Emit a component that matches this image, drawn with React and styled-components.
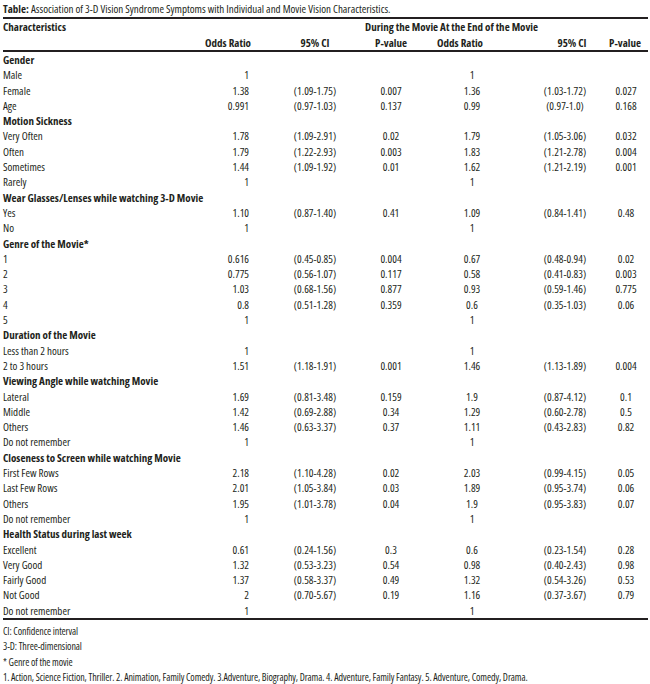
import React from "react";
import styled, { createGlobalStyle } from "styled-components";

const GlobalStyle = createGlobalStyle`
    html, body {
        margin: 0;
        padding: 0;
        background: #ffffff;
    }
    body {
        font-family: "Open Sans", "Noto Sans", "DejaVu Sans Condensed", sans-serif;
        font-stretch: 75%;
        color: #231f20;
        font-size: 11px;
    }
`;

const Page = styled.div`
    width: 645px;
    padding: 0 2px 0 3px;
`;

const Title = styled.div`
    line-height: 17px;
    border-bottom: 2px solid #231f20;
    white-space: nowrap;

    b {
        font-weight: 700;
    }
`;

const Table = styled.table`
    width: 645px;
    border-collapse: collapse;
    table-layout: fixed;
`;

const Head = styled.thead`
    border-bottom: 2px solid #231f20;
`;

const Body = styled.tbody`
    border-bottom: 2px solid #231f20;
`;

const HeadCell = styled.th`
    font-weight: 700;
    padding: 0 ${(p) => p.$pr || 0}px 0 ${(p) => p.$pl || 0}px;
    line-height: ${(p) => p.$lh || 15}px;
    text-align: ${(p) => p.$align || "center"};
    white-space: nowrap;
    vertical-align: top;
`;

const Cell = styled.td`
    padding: 0 ${(p) => p.$pr || 0}px 0 ${(p) => p.$pl || 0}px;
    line-height: 15.3px;
    height: 15.3px;
    text-align: ${(p) => p.$align || "center"};
    white-space: nowrap;
    font-weight: ${(p) => (p.$bold ? 700 : 400)};
`;

const Notes = styled.div`
    padding-top: 4px;
    font-size: 10px;
    letter-spacing: -0.1px;
`;

const Note = styled.div`
    line-height: 15.3px;
    white-space: nowrap;
`;

// label, OR, 95% CI, p  (during)  |  OR, 95% CI, p (end)
const sections = [
    {
        title: "Gender",
        rows: [
            ["Male", "1", "", "", "1", "", ""],
            ["Female", "1.38", "(1.09-1.75)", "0.007", "1.36", "(1.03-1.72)", "0.027"],
            ["Age", "0.991", "(0.97-1.03)", "0.137", "0.99", "(0.97-1.0)", "0.168"],
        ],
    },
    {
        title: "Motion Sickness",
        rows: [
            ["Very Often", "1.78", "(1.09-2.91)", "0.02", "1.79", "(1.05-3.06)", "0.032"],
            ["Often", "1.79", "(1.22-2.93)", "0.003", "1.83", "(1.21-2.78)", "0.004"],
            ["Sometimes", "1.44", "(1.09-1.92)", "0.01", "1.62", "(1.21-2.19)", "0.001"],
            ["Rarely", "1", "", "", "1", "", ""],
        ],
    },
    {
        title: "Wear Glasses/Lenses while watching 3-D Movie",
        rows: [
            ["Yes", "1.10", "(0.87-1.40)", "0.41", "1.09", "(0.84-1.41)", "0.48"],
            ["No", "1", "", "", "1", "", ""],
        ],
    },
    {
        title: "Genre of the Movie*",
        rows: [
            ["1", "0.616", "(0.45-0.85)", "0.004", "0.67", "(0.48-0.94)", "0.02"],
            ["2", "0.775", "(0.56-1.07)", "0.117", "0.58", "(0.41-0.83)", "0.003"],
            ["3", "1.03", "(0.68-1.56)", "0.877", "0.93", "(0.59-1.46)", "0.775"],
            ["4", "0.8", "(0.51-1.28)", "0.359", "0.6", "(0.35-1.03)", "0.06"],
            ["5", "1", "", "", "1", "", ""],
        ],
    },
    {
        title: "Duration of the Movie",
        rows: [
            ["Less than 2 hours", "1", "", "", "1", "", ""],
            ["2 to 3 hours", "1.51", "(1.18-1.91)", "0.001", "1.46", "(1.13-1.89)", "0.004"],
        ],
    },
    {
        title: "Viewing Angle while watching Movie",
        rows: [
            ["Lateral", "1.69", "(0.81-3.48)", "0.159", "1.9", "(0.87-4.12)", "0.1"],
            ["Middle", "1.42", "(0.69-2.88)", "0.34", "1.29", "(0.60-2.78)", "0.5"],
            ["Others", "1.46", "(0.63-3.37)", "0.37", "1.11", "(0.43-2.83)", "0.82"],
            ["Do not remember", "1", "", "", "1", "", ""],
        ],
    },
    {
        title: "Closeness to Screen while watching Movie",
        rows: [
            ["First Few Rows", "2.18", "(1.10-4.28)", "0.02", "2.03", "(0.99-4.15)", "0.05"],
            ["Last Few Rows", "2.01", "(1.05-3.84)", "0.03", "1.89", "(0.95-3.74)", "0.06"],
            ["Others", "1.95", "(1.01-3.78)", "0.04", "1.9", "(0.95-3.83)", "0.07"],
            ["Do not remember", "1", "", "", "1", "", ""],
        ],
    },
    {
        title: "Health Status during last week",
        rows: [
            ["Excellent", "0.61", "(0.24-1.56)", "0.3", "0.6", "(0.23-1.54)", "0.28"],
            ["Very Good", "1.32", "(0.53-3.23)", "0.54", "0.98", "(0.40-2.43)", "0.98"],
            ["Fairly Good", "1.37", "(0.58-3.37)", "0.49", "1.32", "(0.54-3.26)", "0.53"],
            ["Not Good", "2", "(0.70-5.67)", "0.19", "1.16", "(0.37-3.67)", "0.79"],
            ["Do not remember", "1", "", "", "1", "", ""],
        ],
    },
];

// column widths, left to right
const widths = [197, 80, 70, 82, 80, 96, 40];

class App extends React.PureComponent {
    renderRow(row, key) {
        return (
            <tr key={key}>
                <Cell $align="left">{row[0]}</Cell>
                <Cell $align="right" $pr={31}>{row[1]}</Cell>
                <Cell>{row[2]}</Cell>
                <Cell>{row[3]}</Cell>
                <Cell>{row[4]}</Cell>
                <Cell $pl={10}>{row[5]}</Cell>
                <Cell $pr={4}>{row[6]}</Cell>
            </tr>
        );
    }

    render() {
        return (
            <Page>
                <GlobalStyle />
                <Title>
                    <b>Table:</b> Association of 3-D Vision Syndrome Symptoms with Individual and Movie Vision Characteristics.
                </Title>
                <Table>
                    <colgroup>
                        {widths.map((w, i) => (
                            <col key={i} style={{ width: w }} />
                        ))}
                    </colgroup>
                    <Head>
                        <tr>
                            <HeadCell $align="left" $lh={16}>Characteristics</HeadCell>
                            <HeadCell $lh={16} />
                            <HeadCell $lh={16} />
                            <HeadCell colSpan={4} $align="left" $pl={15} $lh={16}>
                                During the Movie At the End of the Movie
                            </HeadCell>
                        </tr>
                        <tr>
                            <HeadCell />
                            <HeadCell $pr={24}>Odds Ratio</HeadCell>
                            <HeadCell>95% CI</HeadCell>
                            <HeadCell>P-value</HeadCell>
                            <HeadCell $pr={24}>Odds Ratio</HeadCell>
                            <HeadCell $pl={24}>95% CI</HeadCell>
                            <HeadCell $pr={6}>P-value</HeadCell>
                        </tr>
                    </Head>
                    <Body>
                        {sections.map((s, si) => (
                            <React.Fragment key={si}>
                                <tr>
                                    <Cell $align="left" $bold colSpan={7}>{s.title}</Cell>
                                </tr>
                                {s.rows.map((r, ri) => this.renderRow(r, si + "-" + ri))}
                            </React.Fragment>
                        ))}
                    </Body>
                </Table>
                <Notes>
                    <Note>CI: Confidence interval</Note>
                    <Note>3-D: Three-dimensional</Note>
                    <Note>* Genre of the movie</Note>
                    <Note>
                        1. Action, Science Fiction, Thriller. 2. Animation, Family Comedy. 3.Adventure, Biography, Drama. 4. Adventure, Family Fantasy. 5. Adventure, Comedy, Drama.
                    </Note>
                </Notes>
            </Page>
        );
    }
}

export default App;
